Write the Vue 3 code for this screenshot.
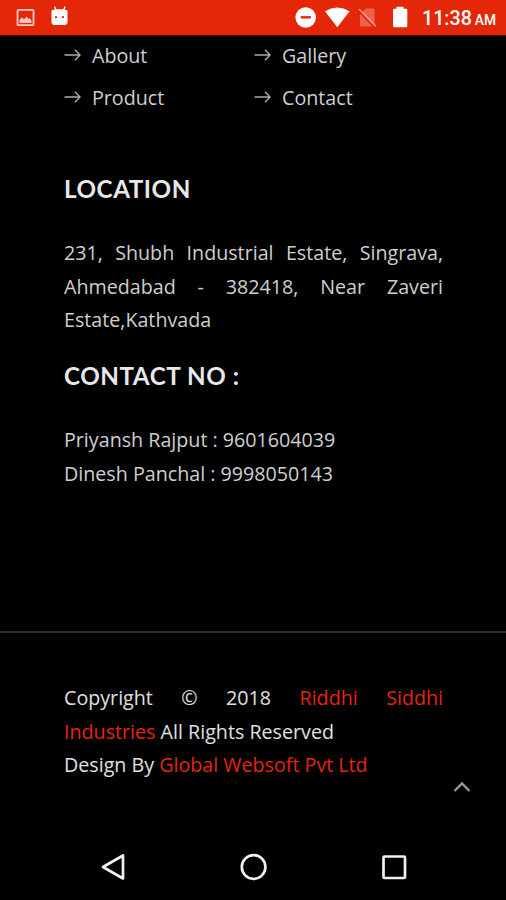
<script setup>
import { ref } from 'vue'

// Footer links
const links = ref(['About', 'Gallery', 'Product', 'Contact'])

// Phone contacts
const contacts = ref([
  { name: 'Priyansh Rajput', phone: '9601604039' },
  { name: 'Dinesh Panchal', phone: '9998050143' },
])

function scrollTop() {
  window.scrollTo(0, 0)
}
</script>

<template>
  <div class="screen">
    <!-- status bar -->
    <header class="status">
      <svg class="status-icons" width="80" height="35" viewBox="0 0 80 35">
        <g opacity="0.75">
          <rect x="17.5" y="9.8" width="16" height="15.4" rx="1" fill="none" stroke="#fff" stroke-width="1.8" />
          <path d="M19.5 23v-3l2.5-2.8 2 2.2 2.500-2.800 2 2.400 1-1 2 2.500V23z" fill="#fff" />
        </g>
        <path d="M54.500 6.500l1.500 4M65 6.500l-1.500 4" stroke="#fff" stroke-width="1.3" />
        <path d="M51.5 10.5c2-1.6 14-1.6 16 0v11.5q0 3-3 3h-10q-3 0-3-3z" fill="#fff" />
        <circle cx="56" cy="17.2" r="1.1" fill="#e42609" />
        <circle cx="63" cy="17.2" r="1.1" fill="#e42609" />
      </svg>
      <div class="status-right">
        <svg width="122" height="35" viewBox="290 0 122 35">
          <circle cx="305.700" cy="17.5" r="10.3" fill="#fff" />
          <rect x="300.8" y="16.1" width="10" height="2.4" fill="#e42609" />
          <path d="M325 11.2Q337.300 3.800 349.600 11.200L337.300 27.200Z" fill="#fff" />
          <path d="M366 8.500h7q1.500 0 1.500 1.500v15q0 1.500-1.500 1.500h-11.500q-1.500 0-1.500-1.500v-10.500z" fill="#fff" opacity="0.28" />
          <path d="M358.500 10.500L375 27.500" stroke="#e42609" stroke-width="2.500" />
          <path d="M359 9L376 26.500" stroke="#fff" stroke-width="1.5" opacity="0.5" />
          <path d="M396.500 6.800h7v2h2.500q1.300 0 1.300 1.300v15.700q0 1.500-1.500 1.500h-11.300q-1.500 0-1.500-1.500v-15.700q0-1.300 1.300-1.300h2.200z" fill="#fff" />
        </svg>
        <span class="clock">11:38 <small>AM</small></span>
      </div>
    </header>

    <!-- footer content -->
    <main class="content">
      <ul class="links">
        <li v-for="link in links" :key="link">
          <svg width="18" height="14" viewBox="0 0 18 14">
            <path d="M0.500 7h15.500M11 1.800l5 5.200-5 5.200" />
          </svg>
          <a>{{ link }}</a>
        </li>
      </ul>

      <h3>LOCATION</h3>
      <p class="address">231, Shubh Industrial Estate, Singrava, Ahmedabad - 382418, Near Zaveri Estate,Kathvada</p>

      <h3 class="contact-title">CONTACT NO :</h3>
      <p v-for="contact in contacts" :key="contact.phone">{{ contact.name }} : {{ contact.phone }}</p>
    </main>

    <!-- copyright -->
    <footer class="copyright">
      <p>
        Copyright © 2018 <a>Riddhi Siddhi Industries</a> All Rights Reserved<br />
        Design By <a>Global Websoft Pvt Ltd</a>
      </p>
      <button class="to-top" @click="scrollTop">
        <svg width="18" height="12" viewBox="0 0 18 12"><path d="M1.500 10L9 2.500l7.500 7.500" /></svg>
      </button>
    </footer>

    <!-- navigation bar -->
    <nav class="navbar">
      <svg width="30" height="30" viewBox="0 0 30 30"><path d="M5 15L25 3.500v23z" /></svg>
      <svg width="30" height="30" viewBox="0 0 30 30"><circle cx="14.600" cy="15" r="11.800" /></svg>
      <svg width="30" height="30" viewBox="0 0 30 30"><rect x="4.500" y="4.500" width="21.500" height="21.500" rx="1" /></svg>
    </nav>
  </div>
</template>

<style>
body {
  margin: 0;
  background: #000;
}
</style>

<style scoped>
.screen {
  display: flex;
  flex-direction: column;
  height: 900px;
  overflow: hidden;
  background: #000;
  color: #cfcfcf;
  font-family: 'Open Sans', 'Noto Sans', sans-serif;
  font-size: 19.68px;
  line-height: 33.73px;
}

p,
h3,
ul {
  margin: 0;
  padding: 0;
}

/* Status bar */
.status {
  display: flex;
  flex: none;
  justify-content: space-between;
  height: 35px;
  background: #e42609;
  border-bottom: 1px solid #4a1209;
  color: #fff;
}

.status-right {
  display: flex;
  padding-right: 10px;
}

.clock {
  width: 84px;
  text-align: right;
  white-space: nowrap;
  font-family: Roboto, sans-serif;
  font-size: 19.7px;
  font-weight: 500;
  line-height: 37px;
}

.clock small {
  margin-left: -2px;
  font-size: 13.8px;
}

/* Footer content */
.content {
  flex: none;
  box-sizing: border-box;
  height: 595px;
  padding: 3px 63px 0 64px;
}

.links {
  display: grid;
  grid-template-columns: 190px 1fr;
  row-gap: 8.4px;
  margin-bottom: 57px;
  list-style: none;
}

.links li {
  display: flex;
  align-items: center;
  gap: 10px;
}

.links svg {
  margin-bottom: 1px;
}

.links path {
  fill: none;
  stroke: #aaa;
  stroke-width: 1.4;
}

h3 {
  margin-bottom: 30px;
  color: #e8e8e8;
  font-family: Lato, sans-serif;
  font-size: 24.2px;
  font-weight: 700;
  letter-spacing: 0.55px;
  line-height: 34px;
}

.contact-title {
  margin-top: 22px;
}

.address,
.copyright p {
  text-align: justify;
}

/* Copyright */
.copyright {
  position: relative;
  flex: none;
  box-sizing: border-box;
  height: 202px;
  padding: 48px 63px 0 64px;
  border-top: 2px solid #2e2e2e;
  color: #e0e0e0;
}

.copyright a {
  color: #e42609;
}

.to-top {
  position: absolute;
  top: 148px;
  right: 35px;
  display: flex;
  padding: 0;
  border: 0;
  background: none;
}

.to-top path {
  fill: none;
  stroke: #999;
  stroke-width: 2.3;
}

/* Navigation bar */
.navbar {
  display: flex;
  justify-content: space-between;
  padding: 18.5px 97px 0 98px;
}

.navbar svg {
  fill: none;
  stroke: #f0f0f0;
  stroke-width: 2.7;
  stroke-linejoin: round;
}
</style>
